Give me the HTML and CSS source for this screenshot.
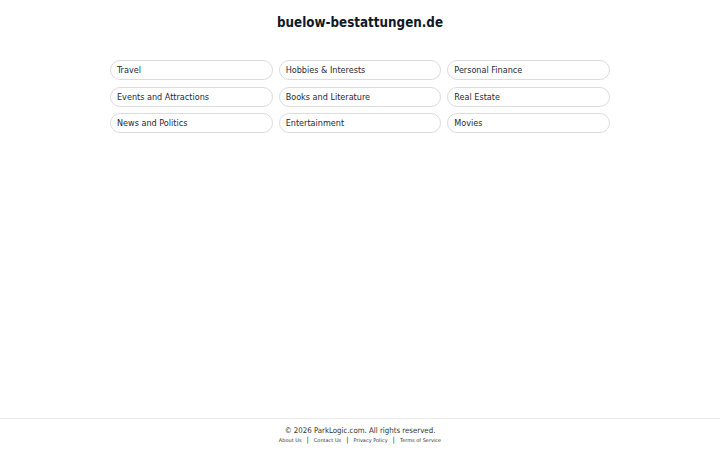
FILE: index.html
```html
<!DOCTYPE html>
<html>
<head>
<meta charset="utf-8">
<link rel="stylesheet" href="styles.css">
</head>
<body>
<div class="page">
  <header class="header"><h1 class="title">buelow-bestattungen.de</h1></header>
  <main class="main">
    <div class="grid">
      <a class="pill" href="#">Travel</a>
      <a class="pill" href="#">Hobbies &amp; Interests</a>
      <a class="pill" href="#">Personal Finance</a>
      <a class="pill" href="#">Events and Attractions</a>
      <a class="pill" href="#">Books and Literature</a>
      <a class="pill" href="#">Real Estate</a>
      <a class="pill" href="#">News and Politics</a>
      <a class="pill" href="#">Entertainment</a>
      <a class="pill" href="#">Movies</a>
    </div>
  </main>
  <footer class="footer">
    <div class="copy">© 2026 ParkLogic.com. All rights reserved.</div>
    <div class="links">
      <a href="#">About Us</a><span class="sep">|</span><a href="#">Contact Us</a><span class="sep">|</span><a href="#">Privacy Policy</a><span class="sep">|</span><a href="#">Terms of Service</a>
    </div>
  </footer>
</div>
</body>
</html>
```
FILE: styles.css
```css
html, body { margin: 0; padding: 0; height: 100%; }
body { font-family: "DejaVu Sans", sans-serif; color: #1a1a1a; background: #fff; }
.page { display: flex; flex-direction: column; min-height: 100%; }
.header { display: flex; justify-content: center; padding-top: 14px; }
.title { margin: 0; font-size: 13.3px; font-weight: bold; color: #111827; line-height: 17px; font-family: "DejaVu Sans Condensed", "DejaVu Sans", sans-serif; font-stretch: condensed; }
.main { flex: 1; display: flex; justify-content: center; padding-top: 29px; }
.grid { width: 500px; display: grid; grid-template-columns: repeat(3, 1fr); column-gap: 6px; row-gap: 6.5px; align-content: start; }
.pill { display: flex; align-items: center; height: 18px; padding: 0 6px; border: 1px solid #dcdcdc; border-radius: 10px; font-size: 9px; color: #1f2937; text-decoration: none; font-family: "DejaVu Sans Condensed", "DejaVu Sans", sans-serif; font-stretch: condensed; }
.footer { border-top: 1px solid #ececec; padding: 7px 0 6px; text-align: center; }
.copy { font-size: 7.8px; color: #333; line-height: 10px; font-family: "DejaVu Sans Condensed", "DejaVu Sans", sans-serif; font-stretch: condensed; }
.links { font-size: 5px; line-height: 8px; color: #333; }
.links a { color: #333; text-decoration: none; }
.sep { font-size: 7px; margin: 0 5px; }
```
